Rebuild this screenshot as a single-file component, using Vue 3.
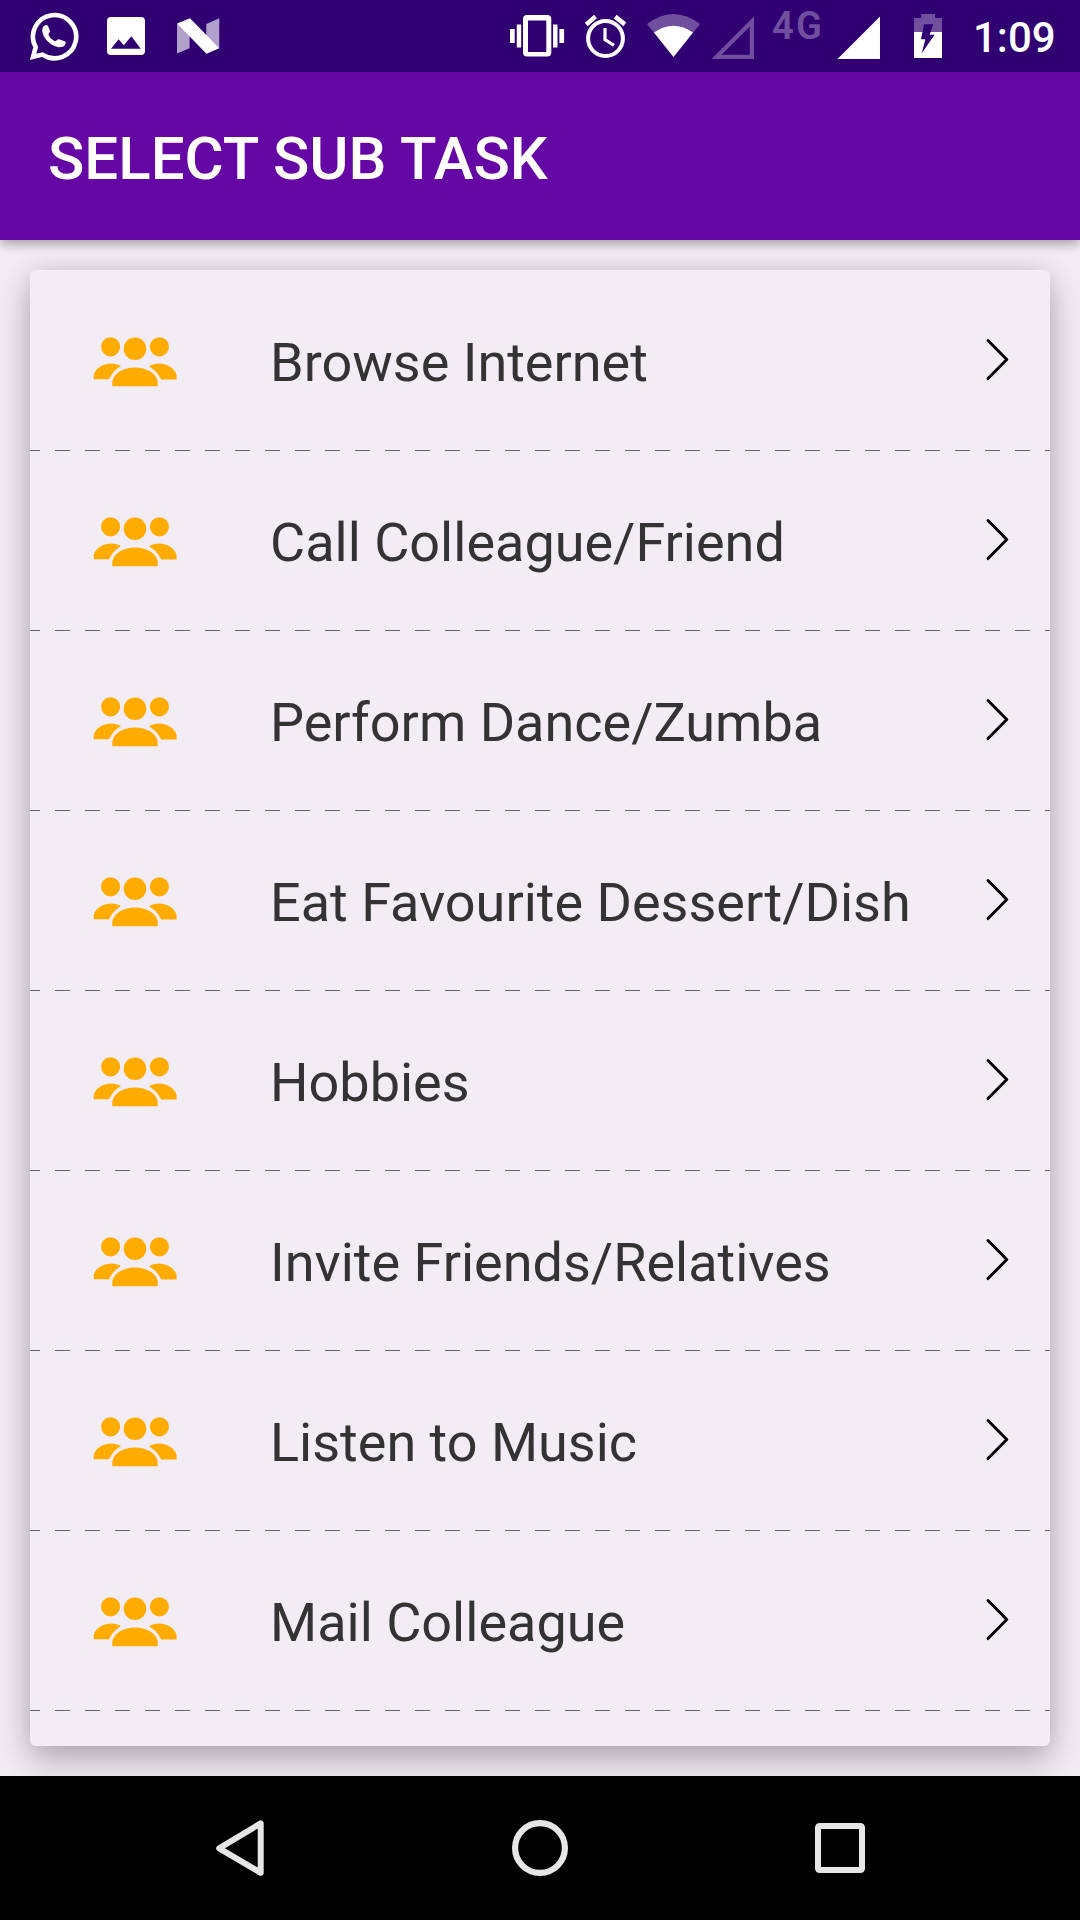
<script setup>
const tasks = [
  'Browse Internet',
  'Call Colleague/Friend',
  'Perform Dance/Zumba',
  'Eat Favourite Dessert/Dish',
  'Hobbies',
  'Invite Friends/Relatives',
  'Listen to Music',
  'Mail Colleague',
]
</script>

<template>
  <div class="screen">
    <div class="status">
      <div class="group notifications">
        <svg width="50" height="72" viewBox="29.5 0 50 72">
          <path
            fill="none" stroke="#fff" stroke-width="4.6" stroke-linejoin="miter"
            d="M33.6 56.8 L36.2 47.2 A21.6 21.6 0 1 1 43 54.6 Z"
          />
          <path
            fill="#fff"
            d="M42.7 30.5 C42.7 27.2 45.1 25 46.9 25 C47.9 25 48.3 25.6 48.7 26.6 L50.5 31 C50.8 32 49.1 33.6 48.9 34.6 C50.1 37.4 52.5 40 55.5 41.2 C56.9 40.8 58.1 38.9 59.3 39.2 L65.3 41.2 C66.7 41.8 66.3 43.6 65.5 45 C64.3 46.9 61.1 47.5 58.1 47 C50.1 45.2 42.9 37.4 42.7 30.5 Z"
          />
        </svg>
        <svg width="40" height="72" viewBox="106 0 40 72">
          <path
            fill="#fff" fill-rule="evenodd"
            d="M111 17 H141 A4 4 0 0 1 145 21 V51 A4 4 0 0 1 141 55 H111 A4 4 0 0 1 107 51 V21 A4 4 0 0 1 111 17 Z M111 48.8 H140.8 L131.3 36.2 L123.8 45.2 L118.6 39.2 Z"
          />
        </svg>
        <svg width="44" height="72" viewBox="176 0 44 72">
          <path fill="#b2a0cc" d="M177 23.5 L189.6 34 V48.3 L177 53.5 Z M206.3 24 L219.3 18.3 V48.5 L206.3 36 Z" />
          <path fill="#fff" d="M177 23.5 L190 18.3 L219.3 48.3 L206.5 53.7 Z" />
        </svg>
      </div>
      <div class="group system">
        <svg width="56" height="72" viewBox="509 0 56 72">
          <path
            fill="#fff" fill-rule="evenodd"
            d="M527 15 H547.3 A4 4 0 0 1 551.3 19 V52.5 A4 4 0 0 1 547.3 56.5 H527 A4 4 0 0 1 523 52.5 V19 A4 4 0 0 1 527 15 Z M528 20.5 V52 H546.3 V20.5 Z"
          />
          <path fill="#fff" d="M510 29 h4.7 v14 h-4.7 Z M516.8 24.5 h4.4 v23 h-4.4 Z M553.1 24.5 h4.4 v23 h-4.4 Z M559.4 29 h4.7 v14 h-4.7 Z" />
        </svg>
        <svg width="46" height="72" viewBox="583 0 46 72">
          <g fill="none" stroke="#fff">
            <circle cx="605.5" cy="38.5" r="17.4" stroke-width="4" />
            <path stroke-width="4.6" d="M586.2 24.4 L595.6 16.6 M615.2 16.6 L624.8 24.4" />
            <path stroke-width="3.2" d="M605 28 V39.7 L614 45.4" />
          </g>
        </svg>
        <svg width="55" height="72" viewBox="646 0 55 72">
          <path fill="#714f9f" d="M647 24 Q673.5 4 700 24 L673.5 57 Z" />
          <path fill="#fff" d="M654 32.4 Q673.5 19.2 693 32.4 L673.5 57 Z" />
        </svg>
        <svg width="45" height="72" viewBox="710 0 45 72">
          <path fill="#714f9f" fill-rule="evenodd" d="M711.5 59 L754 16.5 V59 Z M721.5 54.8 H749.8 V26.5 Z" />
        </svg>
        <span class="network">4G</span>
        <svg width="44" height="72" viewBox="837 0 44 72">
          <path fill="#fff" d="M837.5 59 L880 16.5 V59 Z" />
        </svg>
        <svg width="28" height="72" viewBox="914 0 28 72">
          <path fill="#714f9f" d="M914 18 H921.2 V14 H935 V18 H942 V33 H914 Z" />
          <path fill="#fff" d="M914 32 H942 V58 H914 Z" />
          <path fill="#300073" d="M924 24.3 H933.3 L929.6 34.8 H934.6 L921.6 53.4 L925.4 39.3 H921 Z" />
        </svg>
        <span class="clock">1:09</span>
      </div>
    </div>

    <header class="appbar">
      <h1>SELECT SUB TASK</h1>
    </header>

    <main class="content">
      <ul class="card">
        <li v-for="task in tasks" :key="task" class="row">
          <svg class="people" width="86" height="54" viewBox="92 340 86 54">
            <g fill="#ffab00">
              <circle cx="110.6" cy="346.8" r="9.6" />
              <circle cx="135" cy="348.7" r="11.3" />
              <circle cx="159.4" cy="346.8" r="9.6" />
              <path d="M93.7 379.3 V375.5 C94.5 369 103 363.5 111 363.5 C114.6 363.5 118.2 364.6 121 366 C115.5 369.4 111.4 373.8 109 379.3 Z" />
              <path d="M176.6 379.5 V375.5 C175.6 369 167.2 363.5 159.2 363.5 C155.6 363.5 151.9 364.6 149 366.2 C154.5 369.6 158.8 374 161.2 379.5 Z" />
              <path d="M112.3 386.2 V381 C114 373 124 367.4 135 367.4 C146 367.4 156 373 157.7 381 V386.2 Z" />
            </g>
          </svg>
          <span class="label">{{ task }}</span>
          <svg class="chevron" width="26" height="44" viewBox="984 338 26 44">
            <path d="M988 340.6 L1006.8 359.6 L988 378.6" fill="none" stroke="#000" stroke-width="2.9" stroke-linecap="round" stroke-linejoin="round" />
          </svg>
        </li>
      </ul>
    </main>

    <nav class="navbar">
      <svg width="52" height="60" viewBox="214 1818 52 60">
        <path d="M260.7 1823.3 V1872.8 L219.2 1848.3 Z" fill="none" stroke="#e6e6e6" stroke-width="6" stroke-linejoin="round" />
      </svg>
      <svg width="60" height="60" viewBox="510 1818 60 60">
        <circle cx="540" cy="1848" r="24.9" fill="none" stroke="#e6e6e6" stroke-width="6.2" />
      </svg>
      <svg width="52" height="60" viewBox="814 1818 52 60">
        <rect x="818" y="1826" width="44" height="44" rx="1.5" fill="none" stroke="#e6e6e6" stroke-width="6" />
      </svg>
    </nav>
  </div>
</template>

<style>
body {
  margin: 0;
}
</style>

<style scoped>
.screen {
  width: 1080px;
  height: 1920px;
  display: flex;
  flex-direction: column;
  overflow: hidden;
  background: #f1ebf2;
  font-family: Roboto, "Liberation Sans", sans-serif;
}
svg {
  display: block;
  flex: none;
}
.status {
  height: 72px;
  flex: none;
  display: flex;
  justify-content: space-between;
  background: #300073;
  color: #fff;
}
.group {
  display: flex;
}
.notifications {
  padding-left: 29px;
}
.notifications svg + svg {
  margin-left: 27px;
}
.notifications svg + svg + svg {
  margin-left: 30px;
}
.system {
  width: 571px;
}
.system svg:nth-child(2) {
  margin-left: 18px;
}
.system svg:nth-child(3) {
  margin-left: 17px;
}
.system svg:nth-child(4) {
  margin-left: 9px;
}
.network {
  width: 65px;
  margin-left: 17px;
  line-height: 53px;
  font-size: 38px;
  font-weight: 600;
  letter-spacing: 2.4px;
  color: #714f9f;
}
.system svg:nth-child(7) {
  margin-left: 33px;
}
.clock {
  margin-left: 31px;
  line-height: 75px;
  font-size: 42px;
  font-weight: 500;
}
.appbar {
  height: 168px;
  flex: none;
  display: flex;
  align-items: center;
  padding-left: 48px;
  position: relative;
  background: #6507a5;
  box-shadow: 0 5px 10px -1px rgba(0, 0, 0, 0.32);
}
h1 {
  margin: 6px 0 0;
  font-size: 60px;
  font-weight: 500;
  line-height: 70px;
  color: #fff;
}
.content {
  height: 1476px;
  flex: none;
  padding: 30px;
}
.card {
  height: 100%;
  margin: 0;
  padding: 0;
  list-style: none;
  border-radius: 6px;
  background: #f2edf4;
  box-shadow: 0 15px 34px rgba(0, 0, 0, 0.24), 0 0 24px rgba(0, 0, 0, 0.1);
}
.row {
  height: 180px;
  display: flex;
  align-items: center;
  background: repeating-linear-gradient(90deg, #666 0 15px, transparent 15px 30px) -5px 0 / 1050px 1px no-repeat;
}
.row:first-child {
  background: none;
}
.row:last-child {
  height: 216px;
  align-items: flex-start;
  background:
    repeating-linear-gradient(90deg, #666 0 15px, transparent 15px 30px) -5px 0 / 1050px 1px no-repeat,
    repeating-linear-gradient(90deg, #666 0 15px, transparent 15px 30px) -5px 180px / 1050px 1px no-repeat;
}
.people {
  margin-left: 62px;
  margin-top: 14px;
  overflow: visible;
}
.label {
  flex: 1;
  margin-left: 92px;
  line-height: 64px;
  padding-top: 6px;
  font-size: 54px;
  color: #333;
  white-space: nowrap;
}
.chevron {
  margin-right: 40px;
}
.row:last-child .people {
  margin-top: 70px;
}
.row:last-child .label {
  margin-top: 55px;
}
.row:last-child .chevron {
  margin-top: 68px;
}
.navbar {
  height: 144px;
  flex: none;
  display: flex;
  align-items: center;
  justify-content: space-between;
  padding: 0 214px;
  position: relative;
  background: #000;
}
</style>
